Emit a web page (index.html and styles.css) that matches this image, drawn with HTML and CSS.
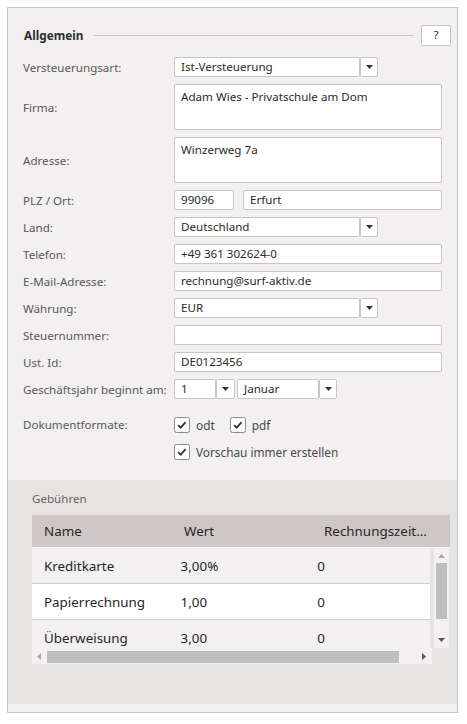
FILE: index.html
```html
<!DOCTYPE html>
<html lang="de">
<head>
<meta charset="utf-8">
<title>Einstellungen</title>
<link rel="stylesheet" href="styles.css">
</head>
<body>
<div class="panel">
  <div class="section-head">
    <span class="section-title">Allgemein</span>
    <span class="section-line"></span>
    <button class="help-btn">?</button>
  </div>

  <div class="form">
    <label class="lbl">Versteuerungsart:</label>
    <div class="combo"><div class="combo-box">Ist-Versteuerung</div><div class="combo-btn"><svg width="7" height="4" viewBox="0 0 7 4"><path d="M0 0H7L3.5 4Z" fill="#333"/></svg></div></div>

    <label class="lbl">Firma:</label>
    <div class="area">Adam Wies - Privatschule am Dom</div>

    <label class="lbl">Adresse:</label>
    <div class="area">Winzerweg 7a</div>

    <label class="lbl">PLZ / Ort:</label>
    <div class="pair"><div class="input plz">99096</div><div class="input ort">Erfurt</div></div>

    <label class="lbl">Land:</label>
    <div class="combo"><div class="combo-box">Deutschland</div><div class="combo-btn"><svg width="7" height="4" viewBox="0 0 7 4"><path d="M0 0H7L3.5 4Z" fill="#333"/></svg></div></div>

    <label class="lbl">Telefon:</label>
    <div class="input">+49 361 302624-0</div>

    <label class="lbl">E-Mail-Adresse:</label>
    <div class="input">rechnung@surf-aktiv.de</div>

    <label class="lbl">Währung:</label>
    <div class="combo"><div class="combo-box">EUR</div><div class="combo-btn"><svg width="7" height="4" viewBox="0 0 7 4"><path d="M0 0H7L3.5 4Z" fill="#333"/></svg></div></div>

    <label class="lbl">Steuernummer:</label>
    <div class="input"></div>

    <label class="lbl">Ust. Id:</label>
    <div class="input">DE0123456</div>

    <label class="lbl">Geschäftsjahr beginnt am:</label>
    <div class="pair pair-date">
      <div class="combo"><div class="combo-box day">1</div><div class="combo-btn day-btn"><svg width="7" height="4" viewBox="0 0 7 4"><path d="M0 0H7L3.5 4Z" fill="#333"/></svg></div></div>
      <div class="combo"><div class="combo-box month">Januar</div><div class="combo-btn"><svg width="7" height="4" viewBox="0 0 7 4"><path d="M0 0H7L3.5 4Z" fill="#333"/></svg></div></div>
    </div>

    <label class="lbl check-row">Dokumentformate:</label>
    <div class="checks check-row">
      <span class="check"><svg class="cb" width="16" height="16" viewBox="0 0 16 16"><rect x="0.5" y="0.5" width="15" height="15" rx="2" fill="#fff" stroke="#8e8a8a"/><path d="M4.2 8.2L6.7 10.7L11.6 5.2" fill="none" stroke="#333" stroke-width="1.8"/></svg>odt</span>
      <span class="check"><svg class="cb" width="16" height="16" viewBox="0 0 16 16"><rect x="0.5" y="0.5" width="15" height="15" rx="2" fill="#fff" stroke="#8e8a8a"/><path d="M4.2 8.2L6.7 10.7L11.6 5.2" fill="none" stroke="#333" stroke-width="1.8"/></svg>pdf</span>
    </div>

    <span class="lbl check-row2"></span>
    <div class="checks check-row2">
      <span class="check"><svg class="cb" width="16" height="16" viewBox="0 0 16 16"><rect x="0.5" y="0.5" width="15" height="15" rx="2" fill="#fff" stroke="#8e8a8a"/><path d="M4.2 8.2L6.7 10.7L11.6 5.2" fill="none" stroke="#333" stroke-width="1.8"/></svg>Vorschau immer erstellen</span>
    </div>
  </div>

  <div class="fees">
    <div class="fees-title">Gebühren</div>
    <div class="table">
      <div class="thead">
        <span class="c1">Name</span><span class="c2">Wert</span><span class="c3">Rechnungszeit…</span>
      </div>
      <div class="tbody-wrap">
        <div class="tbody">
          <div class="tr odd"><span class="c1">Kreditkarte</span><span class="c2">3,00%</span><span class="c3">0</span></div>
          <div class="tr even"><span class="c1">Papierrechnung</span><span class="c2">1,00</span><span class="c3">0</span></div>
          <div class="tr odd"><span class="c1">Überweisung</span><span class="c2">3,00</span><span class="c3">0</span></div>
        </div>
        <div class="vscroll">
          <svg class="arr" width="7" height="4" viewBox="0 0 7 4"><path d="M0 4H7L3.5 0Z" fill="#a9a6a6"/></svg>
          <div class="vthumb"></div>
          <div class="grow"></div>
          <svg class="arr" width="7" height="4" viewBox="0 0 7 4"><path d="M0 0H7L3.5 4Z" fill="#555"/></svg>
        </div>
        <div class="hscroll">
          <svg class="harr" width="4" height="7" viewBox="0 0 4 7"><path d="M4 0V7L0 3.5Z" fill="#a9a6a6"/></svg>
          <div class="hthumb"></div>
          <div class="grow"></div>
          <svg class="harr" width="4" height="7" viewBox="0 0 4 7"><path d="M0 0V7L4 3.5Z" fill="#555"/></svg>
        </div>
      </div>
    </div>
  </div>
</div>
</body>
</html>
```

FILE: styles.css
```css
* { box-sizing: border-box; }
html, body { margin: 0; padding: 0; background: #ffffff; }
body {
  font-family: "Noto Sans", "Open Sans", "DejaVu Sans", sans-serif;
  font-size: 11.6px;
  color: #333;
}
.panel {
  margin: 7px 0 0 7px;
  width: 451px;
  height: 706px;
  border: 1px solid #c9c5c5;
  background: #f2f0f0;
}
.section-head {
  display: flex;
  align-items: center;
  height: 20px;
  margin: 17px 6px 12px 16px;
}
.section-title {
  font-weight: bold;
  color: #2e2e2e;
  font-size: 11.8px;
}
.section-line {
  flex: 1;
  height: 1px;
  background: #cac6c6;
  margin: 0 7px 0 10px;
}
.help-btn {
  width: 30px;
  height: 21px;
  border: 1px solid #c9c5c5;
  background: #fff;
  border-radius: 2px;
  font-family: inherit;
  font-size: 11.6px;
  color: #333;
  padding: 0;
  line-height: 18px;
}
.form {
  display: grid;
  grid-template-columns: 151px 1fr;
  row-gap: 7px;
  align-items: center;
  padding: 0 15px 18px 15px;
}
.lbl {
  color: #5a5858;
  font-size: 11.6px;
  white-space: nowrap;
}
.input, .area, .combo-box {
  background: #fff;
  border: 1px solid #c9c5c5;
  border-radius: 2px;
  color: #2b2b2b;
  font-size: 11.6px;
  padding: 0 6px;
  height: 20px;
  line-height: 18px;
  white-space: nowrap;
}
.area {
  height: 46px;
  padding-top: 3px;
}
.combo { display: flex; }
.combo-box { width: 186px; }
.combo-btn {
  width: 18px;
  height: 20px;
  background: #fff;
  border: 1px solid #c9c5c5;
  border-radius: 2px;
  display: flex;
  align-items: center;
  justify-content: center;
}
.pair { display: flex; gap: 9px; }
.plz { width: 60px; }
.ort { flex: 1; }
.pair-date { gap: 2px; }
.pair .combo-box.day { width: 42px; }
.pair .combo-btn.day-btn { width: 19px; }
.pair .combo-box.month { width: 82px; }
.check-row { margin-top: 9px; height: 20px; line-height: 20px; }
.check-row2 { height: 20px; }
.checks { display: flex; gap: 15px; align-items: center; }
.check {
  display: inline-flex;
  align-items: center;
  gap: 6px;
  color: #4a4848;
  font-size: 11.8px;
}
.cb { display: block; }
.fees {
  background: #e6e3e1;
  height: 224px;
  padding: 11px 7px 0 24px;
}
.fees-title {
  color: #666363;
  font-size: 11.6px;
  line-height: 16px;
  height: 16px;
  margin-bottom: 8px;
}
.thead {
  display: flex;
  height: 32px;
  align-items: center;
  background: #cdc8c7;
  border-bottom: 1px solid #f7f6f6;
  box-sizing: content-box;
  font-size: 13.4px;
  color: #262626;
}
.c1, .c2, .c3 { padding-left: 12px; white-space: nowrap; }
.c1 { width: 140px; }
.c2 { width: 140px; }
.c3 { width: 128px; }
.tbody-wrap {
  display: grid;
  grid-template-columns: 398px 4px 15px;
  grid-template-rows: 100px 16px;
}
.tbody {
  grid-column: 1;
  grid-row: 1;
  overflow: hidden;
}
.tr {
  display: flex;
  align-items: center;
  height: 36px;
  border-bottom: 1px solid #d3cfcf;
  font-size: 13.4px;
  color: #262626;
}
.tr.odd { background: #f2f0f0; }
.tr.even { background: #ffffff; }
.vscroll {
  grid-column: 3;
  grid-row: 1;
  background: #f2f0f0;
  display: flex;
  flex-direction: column;
  align-items: center;
  padding: 6px 0 6px 0;
}
.arr { display: block; }
.vthumb {
  width: 11px;
  height: 56px;
  background: #bebebe;
  margin-top: 5px;
}
.grow { flex: 1; }
.hscroll {
  grid-column: 1;
  grid-row: 2;
  width: 400px;
  background: #f2f0f0;
  display: flex;
  align-items: center;
  padding: 0 6px 0 5px;
}
.harr { display: block; }
.hthumb {
  width: 352px;
  height: 12px;
  background: #bebebe;
  margin-left: 6px;
  align-self: flex-end;
  margin-bottom: 1px;
}
```
